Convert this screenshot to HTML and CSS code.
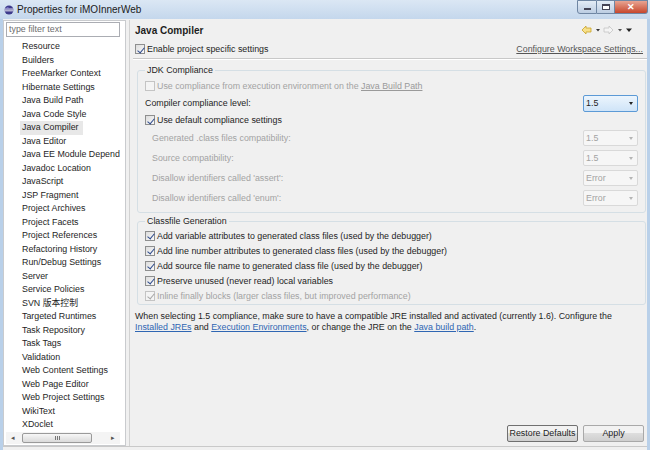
FILE: index.html
```html
<!DOCTYPE html>
<html lang="en">
<head>
    <meta charset="UTF-8">
    <title>Properties for iMOInnerWeb</title>
    <link rel="stylesheet" href="styles.css">
</head>
<body>
<div class="window">
    <div class="titlebar">
        <svg class="app-icon" width="10" height="10" viewBox="0 0 10 10">
            <circle cx="5" cy="5" r="4.5" fill="#3d3a8c"/>
            <rect x="0.5" y="3.6" width="9" height="0.9" fill="#ffffff"/>
            <rect x="0.5" y="5.4" width="9" height="0.9" fill="#ffffff"/>
            <circle cx="3.6" cy="3.2" r="1.2" fill="#8f8ad6" opacity="0.7"/>
        </svg>
        <span class="title">Properties for iMOInnerWeb</span>
        <div class="winbtns">
            <span class="wb min"><i></i></span>
            <span class="wb max"><i></i></span>
            <span class="wb close">&#x2715;</span>
        </div>
    </div>

    <div class="main">
        <aside class="sidebar">
            <div class="filter">type filter text</div>
            <ul class="tree">
                <li>Resource</li>
                <li>Builders</li>
                <li>FreeMarker Context</li>
                <li>Hibernate Settings</li>
                <li>Java Build Path</li>
                <li>Java Code Style</li>
                <li class="selected">Java Compiler</li>
                <li>Java Editor</li>
                <li>Java EE Module Depend</li>
                <li>Javadoc Location</li>
                <li>JavaScript</li>
                <li>JSP Fragment</li>
                <li>Project Archives</li>
                <li>Project Facets</li>
                <li>Project References</li>
                <li>Refactoring History</li>
                <li>Run/Debug Settings</li>
                <li>Server</li>
                <li>Service Policies</li>
                <li>SVN 版本控制</li>
                <li>Targeted Runtimes</li>
                <li>Task Repository</li>
                <li>Task Tags</li>
                <li>Validation</li>
                <li>Web Content Settings</li>
                <li>Web Page Editor</li>
                <li>Web Project Settings</li>
                <li>WikiText</li>
                <li>XDoclet</li>
            </ul>
            <div class="hscroll">
                <span class="sarrow">&#x25C2;</span>
                <span class="thumb"><i></i></span>
                <span class="sarrow right">&#x25B8;</span>
            </div>
        </aside>

        <section class="page">
            <div class="page-head">
                <h1>Java Compiler</h1>
                <svg class="nav" width="58" height="10" viewBox="0 0 58 10">
                    <path d="M1 5 L5 1 L5 3 L10 3 L10 7 L5 7 L5 9 Z" fill="#f7e08a" stroke="#c9a227" stroke-width="0.8"/>
                    <path d="M15 4 L19 4 L17 6.5 Z" fill="#333"/>
                    <path d="M32 5 L28 1 L28 3 L23 3 L23 7 L28 7 L28 9 Z" fill="#f4f4f4" stroke="#c4c4c4" stroke-width="0.8"/>
                    <path d="M37 4 L41 4 L39 6.5 Z" fill="#555"/>
                    <path d="M45 3.5 L51 3.5 L48 7 Z" fill="#222"/>
                </svg>
            </div>

            <div class="enable-row">
                <label class="check"><span class="cb on"></span>Enable project specific settings</label>
                <a class="ws-link">Configure Workspace Settings...</a>
            </div>
            <div class="sep"></div>

            <fieldset class="group jdk">
                <legend>JDK Compliance</legend>
                <div class="row r16 disabled"><label class="check"><span class="cb"></span>Use compliance from execution environment on the&nbsp;<u>Java Build Path</u></label></div>
                <div class="row r18 level">
                    <span>Compiler compliance level:</span>
                    <span class="combo active">1.5<b></b></span>
                </div>
                <div class="row r16"><label class="check"><span class="cb on"></span>Use default compliance settings</label></div>
                <div class="row r20 disabled sub"><span>Generated .class files compatibility:</span><span class="combo">1.5<b></b></span></div>
                <div class="row r20 disabled sub"><span>Source compatibility:</span><span class="combo">1.5<b></b></span></div>
                <div class="row r20 disabled sub"><span>Disallow identifiers called 'assert':</span><span class="combo">Error<b></b></span></div>
                <div class="row r20 disabled sub"><span>Disallow identifiers called 'enum':</span><span class="combo">Error<b></b></span></div>
            </fieldset>

            <fieldset class="group classfile">
                <legend>Classfile Generation</legend>
                <div class="row r15"><label class="check"><span class="cb on"></span>Add variable attributes to generated class files (used by the debugger)</label></div>
                <div class="row r15"><label class="check"><span class="cb on"></span>Add line number attributes to generated class files (used by the debugger)</label></div>
                <div class="row r15"><label class="check"><span class="cb on"></span>Add source file name to generated class file (used by the debugger)</label></div>
                <div class="row r15"><label class="check"><span class="cb on"></span>Preserve unused (never read) local variables</label></div>
                <div class="row r15 disabled"><label class="check"><span class="cb on"></span>Inline finally blocks (larger class files, but improved performance)</label></div>
            </fieldset>

            <p class="note">
                When selecting 1.5 compliance, make sure to have a compatible JRE installed and activated (currently 1.6). Configure the<br>
                <a>Installed JREs</a> and <a>Execution Environments</a>, or change the JRE on the <a>Java build path</a>.
            </p>

            <div class="buttons">
                <button class="btn restore">Restore Defaults</button>
                <button class="btn apply">Apply</button>
            </div>
        </section>
    </div>
    <div class="bottom"></div>
</div>
</body>
</html>
```

FILE: styles.css
```css
/* base */
* {
    margin: 0;
    padding: 0;
    box-sizing: border-box;
}

body {
    width: 650px;
    height: 450px;
    overflow: hidden;
    background: #f0f0f0;
    font-family: "Liberation Sans", Arial, "Noto Sans CJK SC", sans-serif;
    font-size: 8.85px;
    color: #1e1e1e;
}

.window {
    height: 450px;
    display: flex;
    flex-direction: column;
    border-left: 3px solid #b9d0e9;
    border-right: 3px solid #b9d0e9;
    background: #f0f0f0;
}

/* title bar */
.titlebar {
    height: 19px;
    flex-shrink: 0;
    display: flex;
    align-items: center;
    background: linear-gradient(#dbe7f4, #c4d7ec);
    margin: 0 -3px;
    padding-left: 3px;
}

.app-icon {
    margin-left: 1px;
    margin-right: 3px;
}

.title {
    font-size: 10px;
    color: #1a1a1a;
}

.winbtns {
    margin-left: auto;
    align-self: flex-start;
    display: flex;
    height: 14px;
    margin-right: 2px;
}

.wb {
    display: flex;
    align-items: center;
    justify-content: center;
    height: 14px;
    border: 1px solid #6f86a3;
    background: linear-gradient(#e3ecf6, #bccde2);
}

.wb.min { width: 20px; border-radius: 0 0 0 3px; }
.wb.min i { width: 7px; height: 2px; background: #fff; border: 1px solid #445; margin-top: 4px; }
.wb.max { width: 18px; border-left: none; }
.wb.max i { width: 8px; height: 6px; border: 1px solid #445; border-top-width: 2px; background: #fff; }
.wb.close {
    width: 33px;
    border-left: none;
    border-radius: 0 0 3px 0;
    background: linear-gradient(#e8a492, #c7472d);
    color: #fff;
    font-size: 9px;
    font-weight: bold;
}

/* main area */
.main {
    flex: 1;
    display: flex;
    padding-top: 1px;
}

.sidebar {
    width: 123px;
    background: #fff;
    border: 1px solid #c9cbce;
    display: flex;
    flex-direction: column;
}

.filter {
    margin: 1px 5px 0 2px;
    height: 15px;
    border: 1px solid #abadb3;
    padding-left: 2px;
    line-height: 13px;
    color: #6d6d6d;
}

.tree {
    list-style: none;
    padding: 3px 0 0 18px;
    flex: 1;
}

.tree li {
    height: 13.5px;
    line-height: 13.5px;
    white-space: nowrap;
}

.tree li.selected {
    background: #e8e8e8;
    margin-left: -2px;
    padding-left: 2px;
    width: 63px;
}

.hscroll {
    height: 12px;
    margin: 0 5px 1px 2px;
    display: flex;
    align-items: center;
    background: #f4f4f4;
}

.sarrow {
    width: 14px;
    text-align: center;
    font-size: 7px;
    color: #555;
}

.thumb {
    width: 70px;
    height: 10px;
    margin-left: 2px;
    border: 1px solid #9a9a9a;
    border-radius: 2px;
    background: linear-gradient(#f7f7f7, #dadada);
    display: flex;
    justify-content: center;
    align-items: center;
}

.thumb i {
    width: 5px;
    height: 4px;
    border-left: 1px solid #777;
    border-right: 1px solid #777;
    background: linear-gradient(90deg, transparent 40%, #777 40%, #777 60%, transparent 60%);
}

.sarrow.right { margin-left: auto; }

/* preference page */
.page {
    flex: 1;
    display: flex;
    flex-direction: column;
    margin-left: 3px;
    border-left: 1px solid #d2d2d2;
    padding: 1px 0 4px 5px;
}

.page-head {
    height: 18px;
    flex-shrink: 0;
    display: flex;
    align-items: center;
}

.page-head h1 {
    font-size: 10px;
    font-weight: bold;
}

.nav {
    margin-left: auto;
    margin-right: 8px;
}

.enable-row {
    height: 16px;
    margin-top: 2px;
    flex-shrink: 0;
    display: flex;
    align-items: center;
}

.ws-link {
    margin-left: auto;
    margin-right: 4px;
    color: #555;
    text-decoration: underline;
}

.sep {
    height: 2px;
    flex-shrink: 0;
    margin: 1px 0 0 -2px;
    border-top: 1px solid #c8c8c8;
    border-bottom: 1px solid #fff;
}

.check {
    display: flex;
    align-items: center;
    white-space: nowrap;
}

.cb {
    width: 10px;
    height: 10px;
    border: 1px solid #8e8f8f;
    background: linear-gradient(135deg, #dcdcdc, #fafafa);
    margin-right: 2px;
    position: relative;
}

.cb.on::after {
    content: "";
    position: absolute;
    left: 2.5px;
    top: 0.5px;
    width: 3px;
    height: 6px;
    border: solid #2d4a8c;
    border-width: 0 1.5px 1.5px 0;
    transform: rotate(40deg);
}

/* groups */
.group {
    margin: 4px 1px 0 2px;
    border: 1px solid #d5dfe5;
    border-radius: 3px;
    padding: 0 6px 0 7px;
    flex-shrink: 0;
}

.group legend {
    padding: 0 2px;
    margin-left: 0;
    line-height: 13px;
}

.group.jdk { padding-top: 1px; padding-bottom: 4px; }
.group.classfile { margin-top: 2px; padding-bottom: 1px; }

.row {
    display: flex;
    align-items: center;
}

.r15 { height: 15px; }
.r16 { height: 16px; }
.r18 { height: 18px; }
.r20 { height: 20px; }

.row.sub { padding-left: 7px; }

.disabled { color: #a3a3a3; }
.disabled .cb { border-color: #c4c4c4; background: #f4f4f4; }
.disabled .cb.on::after { border-color: #a6a6a6; }
.disabled u { color: #9a9a9a; }

.combo {
    margin-left: auto;
    margin-right: 1px;
    width: 55px;
    height: 16px;
    border: 1px solid #d9d9d9;
    border-radius: 2px;
    background: #f6f6f6;
    display: flex;
    align-items: center;
    padding-left: 2px;
}

.combo b {
    margin-left: auto;
    margin-right: 4px;
    border: 2.5px solid transparent;
    border-top: 3px solid #b5b5b5;
    border-bottom: none;
}

.combo.active {
    height: 17px;
    border-color: #5c9ad6;
    background: linear-gradient(#ecf5fd, #cfe4f8);
    color: #1e1e1e;
}

.combo.active b { border-top-color: #222; }

/* footer text */
.note {
    margin-top: 6px;
    line-height: 11px;
}

.note a {
    color: #2f66b3;
    text-decoration: underline;
}

.buttons {
    margin-top: auto;
    display: flex;
    justify-content: flex-end;
    gap: 5px;
    padding-right: 3px;
}

.btn {
    height: 17px;
    font: inherit;
    color: #1e1e1e;
    border: 1px solid #707070;
    border-radius: 2px;
    background: linear-gradient(#f2f2f2 50%, #dddddd 50%, #cfcfcf);
}

.btn.restore { width: 71px; }
.btn.apply { width: 61px; border-color: #a9a9a9; }

.bottom {
    height: 8px;
    flex-shrink: 0;
    border-top: 1px solid #c9c9c9;
    background: #f0f0f0;
}
```
